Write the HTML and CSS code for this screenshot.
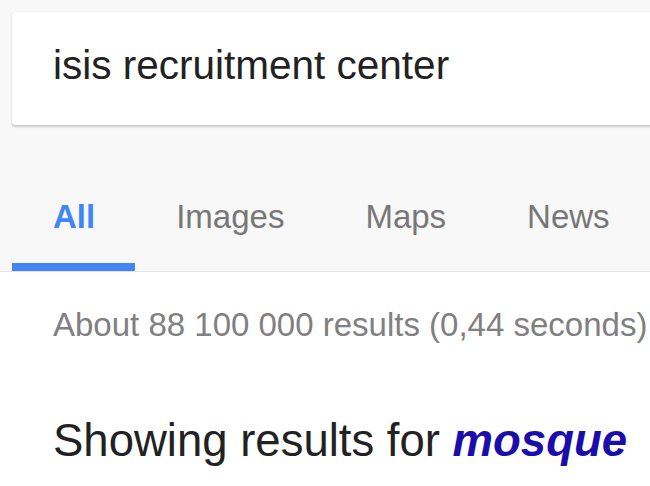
FILE: index.html
```html
<!DOCTYPE html>
<html>
<head>
    <meta charset="utf-8"/>
    <title>isis recruitment center - Search</title>
    <link rel="stylesheet" href="styles.css">
</head>
<body>
<div class="header">
    <!--搜索框-->
    <div class="searchBox">isis recruitment center</div>
    <!--分类标签-->
    <ul class="tabList">
        <li class="tabItem active">All</li>
        <li class="tabItem">Images</li>
        <li class="tabItem">Maps</li>
        <li class="tabItem">News</li>
    </ul>
</div>
<div class="results">
    <div class="resultStats">About 88 100 000 results (0,44 seconds)</div>
    <div class="spelling">Showing results for <a class="spellLink" href="#">mosque</a></div>
</div>
</body>
</html>
```

FILE: styles.css
```css
html, body {
    margin: 0;
    padding: 0;
    background: #fff;
    font-family: "Liberation Sans", Arial, sans-serif;
    overflow: hidden;
}

.header {
    background: #f8f8f8;
    padding: 12px 0 0 12px;
    border-bottom: 1px solid #e3e3e3;
}

.searchBox {
    height: 113px;
    box-sizing: border-box;
    margin-right: -20px;
    padding: 30px 0 0 41px;
    background: #fff;
    border-radius: 3px;
    box-shadow: 0 2px 2px rgba(0, 0, 0, 0.18), 0 0 1px rgba(0, 0, 0, 0.12);
    font-size: 40.5px;
    line-height: 47px;
    color: #222;
    white-space: nowrap;
}

.tabList {
    list-style: none;
    margin: 0;
    padding: 0;
    display: flex;
    white-space: nowrap;
}

.tabItem {
    height: 146px;
    box-sizing: border-box;
    padding: 73px 40px 0 41px;
    border-bottom: 8px solid transparent;
    font-size: 33px;
    line-height: 38px;
    color: #777;
}

.tabItem.active {
    color: #4285f4;
    font-weight: bold;
    border-bottom-color: #4285f4;
}

.results {
    padding-left: 53px;
    white-space: nowrap;
}

.resultStats {
    margin-top: 34px;
    font-size: 33px;
    line-height: 38px;
    color: #808080;
}

.spelling {
    margin-top: 70px;
    font-size: 45.5px;
    line-height: 53px;
    color: #222;
}

.spellLink {
    color: #1a0dab;
    font-weight: bold;
    font-style: italic;
    text-decoration: none;
}
```
